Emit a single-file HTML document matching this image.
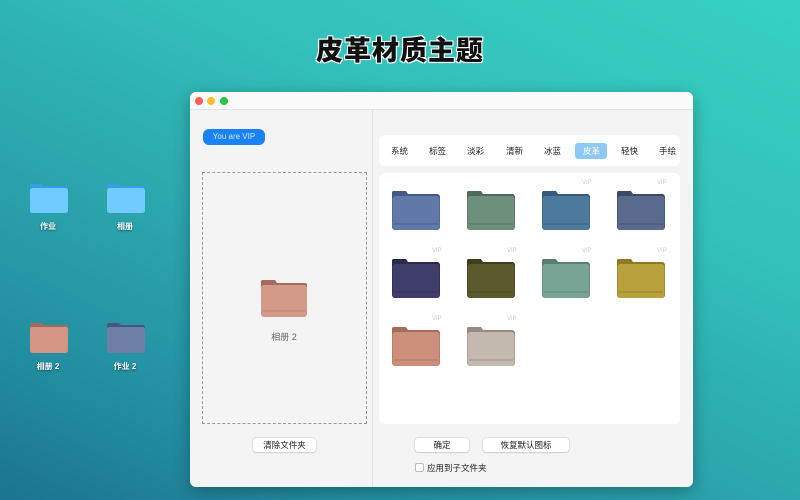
<!DOCTYPE html>
<html><head><meta charset="utf-8"><style>
*{margin:0;padding:0;box-sizing:border-box}
body{width:800px;height:500px;overflow:hidden;position:relative;font-family:"Liberation Sans","Noto Sans CJK SC",sans-serif;
background:linear-gradient(205deg,#37d0c2 0%,#33c2bb 30%,#2ba4ad 60%,#2390a2 80%,#1c7490 100%);}
.title{position:absolute;left:0;width:800px;top:29px;text-align:center;font-size:27px;font-weight:900;color:#111;
text-shadow:0 0 2px #fff,1px 1px 0 #fff,-1px -1px 0 #fff,1px -1px 0 #fff,-1px 1px 0 #fff;letter-spacing:1px}
.win{position:absolute;left:190px;top:92px;width:503px;height:395px;background:#f4f4f4;border-radius:6px;overflow:hidden;box-shadow:0 4px 16px rgba(0,0,0,.3)}
.tb{height:18px;background:#fafafa;border-bottom:1px solid #e3e3e3;position:relative}
.dot{position:absolute;top:5px;width:8px;height:8px;border-radius:50%}
.div{position:absolute;left:182px;top:18px;bottom:0;width:1px;background:#e0e0e0}
.vip{position:absolute;left:13px;top:37px;width:62px;height:16px;border-radius:6px;background:#1a82f7;color:#cfe6ff;font-size:8px;line-height:16px;text-align:center}
.dash{position:absolute;left:12px;top:80px;width:165px;height:252px;border:1px dashed #999}
.btn{position:absolute;height:14px;background:#fff;border-radius:3px;box-shadow:0 0 0 .5px #ccc,0 1px 1px rgba(0,0,0,.15);font-size:8.5px;line-height:14px;text-align:center;color:#222}
.tabs{position:absolute;left:189px;top:43px;width:301px;height:31px;background:#fff;border-radius:6px}
.tab{position:absolute;top:10px;font-size:8.5px;color:#222}
.sel{position:absolute;left:196px;top:8px;width:32px;height:16px;background:#8cc9f7;border-radius:3px}
.grid{position:absolute;left:189px;top:81px;width:301px;height:251px;background:#fff;border-radius:6px}
.f{position:absolute;width:48px;height:42px}
.v{position:absolute;font-size:6px;color:#ccc}
.lbl{position:absolute;font-size:8px;color:#fff;font-weight:bold;text-align:center;width:60px;text-shadow:0 1px 2px rgba(0,0,0,.5)}
</style></head><body>
<div class="title">皮革材质主题</div>

<svg style="position:absolute;left:29px;top:181px" width="40" height="32"><path d="M2 3h11l2 2h22a2 2 0 0 1 2 2v3H1V4z" fill="#3a9be8"/><rect x="1" y="7" width="38" height="25" rx="2.5" fill="#6ecbfb"/></svg>
<svg style="position:absolute;left:106px;top:181px" width="40" height="32"><path d="M2 3h11l2 2h22a2 2 0 0 1 2 2v3H1V4z" fill="#3a9be8"/><rect x="1" y="7" width="38" height="25" rx="2.5" fill="#6ecbfb"/></svg>
<div class="lbl" style="left:18px;top:221px">作业</div>
<div class="lbl" style="left:95px;top:221px">相册</div>
<svg style="position:absolute;left:29px;top:320px" width="40" height="34"><path d="M2 3h11l2 2h22a2 2 0 0 1 2 2v3H1V4z" fill="#a86a5c"/><rect x="1" y="7" width="38" height="26" rx="2.5" fill="#d39483"/></svg>
<svg style="position:absolute;left:106px;top:320px" width="40" height="34"><path d="M2 3h11l2 2h22a2 2 0 0 1 2 2v3H1V4z" fill="#4b5680"/><rect x="1" y="7" width="38" height="26" rx="2.5" fill="#6f7ea8"/></svg>
<div class="lbl" style="left:18px;top:361px">相册 2</div>
<div class="lbl" style="left:95px;top:361px">作业 2</div>

<div class="win">
<div class="tb"><div class="dot" style="left:5px;background:#fe5f57"></div><div class="dot" style="left:17px;background:#febc2e"></div><div class="dot" style="left:30px;background:#28c840"></div></div>
<div class="div"></div>
<div class="vip">You are VIP</div>
<div class="dash"></div>
<svg style="position:absolute;left:70px;top:186px" width="48" height="40"><path d="M2 2h13l2 3h28a2 2 0 0 1 2 2v5H1V3z" fill="#a86a5c"/><rect x="1" y="7" width="46" height="32" rx="3" fill="#d49a89"/><line x1="3" y1="33" x2="45" y2="33" stroke="#b57a6b" stroke-width=".7"/></svg>
<div style="position:absolute;left:70px;top:238px;width:48px;text-align:center;font-size:9px;color:#666">相册 2</div>
<div class="btn" style="left:63px;top:346px;width:63px">清除文件夹</div>

<div class="tabs"><div class="sel"></div>
<span class="tab" style="left:12px">系统</span><span class="tab" style="left:50px">标签</span><span class="tab" style="left:88px">淡彩</span><span class="tab" style="left:127px">清新</span><span class="tab" style="left:165px">冰蓝</span><span class="tab" style="left:204px;color:#fff">皮革</span><span class="tab" style="left:242px">轻快</span><span class="tab" style="left:280px">手绘</span></div>
<div class="grid" id="g"></div>
<div class="btn" style="left:225px;top:346px;width:54px">确定</div>
<div class="btn" style="left:293px;top:346px;width:86px">恢复默认图标</div>
<div style="position:absolute;left:225px;top:371px;width:9px;height:9px;border:1px solid #bbb;border-radius:2px;background:#fff"></div>
<div style="position:absolute;left:237px;top:370px;font-size:8.5px;color:#222">应用到子文件夹</div>
</div>
<script>
var cols=[["#5f79a8","#44598a"],["#6f8f7d","#4f6a5c"],["#4c7a9c","#365a7a"],["#5a6a8c","#3e4a68"],["#3f3e6a","#2a2a4c"],["#5a5a2c","#3e3f1c"],["#79a394","#5a7f72"],["#b8a23e","#8c7a24"],["#cc8f7c","#a66c5a"],["#c4b9ae","#958a80"]];
var g=document.getElementById('g'),h='';
cols.forEach(function(c,i){var x=13+(i%4)*75,y=16+Math.floor(i/4)*68;
h+='<svg class="f" style="left:'+x+'px;top:'+y+'px" viewBox="0 0 48 42"><path d="M1 2h13l2 3h29a2 2 0 0 1 2 2v5H0V3z" fill="'+c[1]+'"/><rect x="0" y="5" width="48" height="36" rx="3" fill="'+c[1]+'"/><rect x="0.5" y="7" width="47" height="34" rx="3" fill="'+c[0]+'"/><line x1="2" y1="35" x2="46" y2="35" stroke="'+c[1]+'" stroke-width=".8"/></svg>';
if(i>1)h+='<div class="v" style="left:'+(x+40)+'px;top:'+(y-9)+'px">VIP</div>';});
g.innerHTML=h;
</script>
</body></html>
